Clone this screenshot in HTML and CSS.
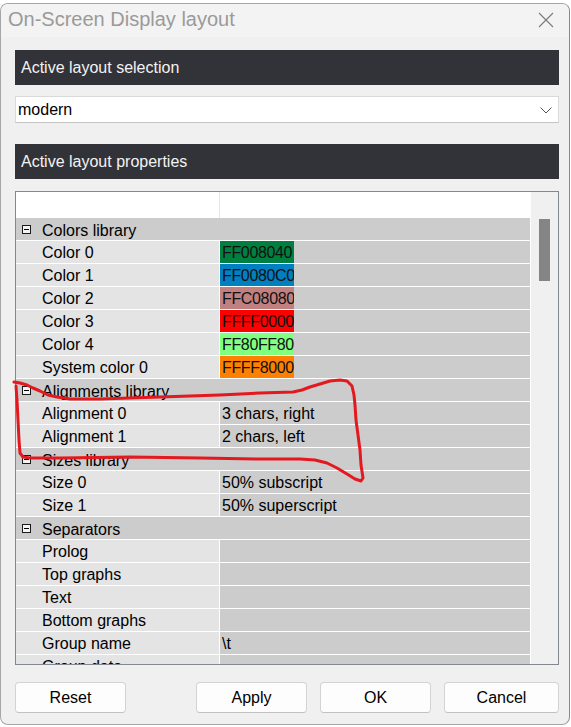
FILE: index.html
```html
<!DOCTYPE html>
<html>
<head>
<meta charset="utf-8">
<title>On-Screen Display layout</title>
<link rel="stylesheet" href="styles.css">
</head>
<body>
<div class="window">
  <div class="titlebar">
    <span class="title">On-Screen Display layout</span>
    <svg class="close" width="16" height="16" viewBox="0 0 16 16"><path d="M1 1 L15 15 M15 1 L1 15" stroke="#7d7d7d" stroke-width="1.2" fill="none"/></svg>
  </div>
  <div class="content">
    <div class="section-head">Active layout selection</div>
    <div class="combo">
      <span class="combo-text">modern</span>
      <svg class="chevron" width="12" height="7" viewBox="0 0 12 7"><path d="M0.5 0.5 L6 6 L11.5 0.5" stroke="#555" stroke-width="1" fill="none"/></svg>
    </div>
    <div class="section-head gap-head">Active layout properties</div>
    <div class="grid">
      <div class="grid-main">
        <div class="grid-head"><div class="hname"></div><div class="hval"></div></div>
        <div class="rows">
          <div class="row cat"><span class="toggle"></span><span class="cat-text">Colors library</span></div>
          <div class="row prop"><div class="name">Color 0</div><div class="val"><span class="swatch sw-0">FF008040</span></div></div>
          <div class="row prop"><div class="name">Color 1</div><div class="val"><span class="swatch sw-1">FF0080C0</span></div></div>
          <div class="row prop"><div class="name">Color 2</div><div class="val"><span class="swatch sw-2">FFC08080</span></div></div>
          <div class="row prop"><div class="name">Color 3</div><div class="val"><span class="swatch sw-3">FFFF0000</span></div></div>
          <div class="row prop"><div class="name">Color 4</div><div class="val"><span class="swatch sw-4">FF80FF80</span></div></div>
          <div class="row prop"><div class="name">System color 0</div><div class="val"><span class="swatch sw-5">FFFF8000</span></div></div>
          <div class="row cat"><span class="toggle"></span><span class="cat-text">Alignments library</span></div>
          <div class="row prop"><div class="name">Alignment 0</div><div class="val"><span class="vtext">3 chars, right</span></div></div>
          <div class="row prop"><div class="name">Alignment 1</div><div class="val"><span class="vtext">2 chars, left</span></div></div>
          <div class="row cat"><span class="toggle"></span><span class="cat-text">Sizes library</span></div>
          <div class="row prop"><div class="name">Size 0</div><div class="val"><span class="vtext">50% subscript</span></div></div>
          <div class="row prop"><div class="name">Size 1</div><div class="val"><span class="vtext">50% superscript</span></div></div>
          <div class="row cat"><span class="toggle"></span><span class="cat-text">Separators</span></div>
          <div class="row prop"><div class="name">Prolog</div><div class="val"></div></div>
          <div class="row prop"><div class="name">Top graphs</div><div class="val"></div></div>
          <div class="row prop"><div class="name">Text</div><div class="val"></div></div>
          <div class="row prop"><div class="name">Bottom graphs</div><div class="val"></div></div>
          <div class="row prop"><div class="name">Group name</div><div class="val"><span class="vtext">\t</span></div></div>
          <div class="row prop"><div class="name">Group data</div><div class="val"></div></div>
        </div>
      </div>
      <div class="scrollbar"><div class="thumb"></div></div>
    </div>
    <div class="buttons">
      <button class="btn">Reset</button>
      <div class="spacer"></div>
      <button class="btn">Apply</button>
      <button class="btn">OK</button>
      <button class="btn btn-wide">Cancel</button>
    </div>
  </div>
</div>
<svg class="annotation" width="571" height="727" viewBox="0 0 571 727">
  <path d="M14 382 L20 383 L27 385 L33 388 L40 391 L48 395 L57 397 L70 399 L100 399 L130 398 L160 397 L190 396 L220 395 L260 393 L293 392 L302 390 L310 387 L320 384 L330 381 L340 380 L347 381 L352 386 L354 395 L355 405 L356 420 L358 435 L360 450 L361 465 L363 478 L361 481 L355 479 L347 474 L337 468 L327 463 L315 460 L300 459 L260 459 L200 458 L130 457 L60 458 L30 458 L23 457 L20 453 L19 440 L18 420 L17 400 L16 386" fill="none" stroke="#e3191f" stroke-width="3" stroke-linejoin="round" stroke-linecap="round"/>
</svg>
</body>
</html>
```

FILE: styles.css
```css
* { box-sizing: border-box; }

html, body {
  margin: 0;
  padding: 0;
  background: #ffffff;
}

body {
  position: relative;
  width: 571px;
  height: 727px;
  overflow: hidden;
  font-family: "Liberation Sans", Arial, sans-serif;
  font-size: 16px;
  color: #000;
}

.window {
  margin-top: 3px;
  width: 570px;
  height: 722px;
  background: #f0f0f0;
  border: 1px solid #a6a6a6;
  border-right-color: #8a8a8a;
  border-radius: 8px;
  overflow: hidden;
}

.titlebar {
  height: 33px;
  background: #f3f3f3;
  display: flex;
  align-items: center;
  justify-content: space-between;
  padding: 0 15px 0 7px;
}

.title {
  font-size: 20px;
  color: #9a9a9a;
  margin-top: -2px;
}

.close { display: block; margin-top: -2px; }

.content {
  padding: 13px 10px 0 14px;
}

.section-head {
  height: 35px;
  background: #323338;
  color: #f2f2f2;
  display: flex;
  align-items: center;
  padding: 1px 0 0 6px;
}

.gap-head { margin-top: 21px; }

.combo {
  margin-top: 11px;
  height: 27px;
  background: #ffffff;
  border: 1px solid #d9d9d9;
  border-bottom-color: #c4c4c4;
  display: flex;
  align-items: center;
  justify-content: space-between;
  padding: 1px 6px 0 2px;
}

.chevron { display: block; }

.grid {
  margin-top: 12px;
  height: 474px;
  border: 1px solid #828790;
  display: flex;
  overflow: hidden;
  background: #ffffff;
}

.grid-main {
  flex: 0 0 515px;
  border-right: 1px solid #ffffff;
  overflow: hidden;
}

.grid-head {
  height: 26px;
  display: flex;
  background: #ffffff;
}

.hname {
  width: 204px;
  border-right: 1px solid #e6e6e6;
}

.row {
  height: 23px;
  border-bottom: 1px solid #ffffff;
  display: flex;
  align-items: stretch;
}

.cat {
  background: #cccccc;
  align-items: center;
  padding-left: 6px;
}

.toggle {
  position: relative;
  width: 9px;
  height: 9px;
  border: 1px solid #1a1a1a;
  background: #f4f4f4;
  flex: 0 0 9px;
  margin-top: 1px;
}

.toggle::after {
  content: "";
  position: absolute;
  left: 1px;
  top: 3px;
  width: 5px;
  height: 1px;
  background: #000;
}

.cat-text {
  margin-left: 11px;
  padding-top: 3px;
}

.name {
  width: 204px;
  flex: 0 0 204px;
  background: #e4e4e4;
  border-right: 1px solid #ffffff;
  padding: 2px 0 0 26px;
  display: flex;
  align-items: center;
}

.val {
  flex: 1;
  background: #cccccc;
  display: flex;
  align-items: stretch;
}

.vtext {
  padding: 2px 0 0 2px;
  display: flex;
  align-items: center;
}

.swatch {
  width: 74px;
  padding: 2px 0 0 2px;
  display: flex;
  align-items: center;
  color: #111;
  letter-spacing: -0.35px;
  overflow: hidden;
  white-space: nowrap;
}

.sw-0 { background: #008040; }
.sw-1 { background: #0080c0; }
.sw-2 { background: #c08080; }
.sw-3 { background: #ff0000; }
.sw-4 { background: #80ff80; }
.sw-5 { background: #ff8000; }

.scrollbar {
  flex: 1;
  background: #f0f0f0;
  padding: 27px 0 0 8px;
}

.thumb {
  width: 11px;
  height: 62px;
  background: #858585;
}

.buttons {
  margin-top: 17px;
  display: flex;
  gap: 13px;
}

.spacer { flex: 1; }

.btn {
  width: 111px;
  height: 31px;
  background: #fdfdfd;
  border: 1px solid #d3d3d3;
  border-bottom-color: #c2c2c2;
  border-radius: 4px;
  font-family: "Liberation Sans", Arial, sans-serif;
  font-size: 16px;
  color: #000;
  padding: 1px 0 0;
}

.btn-wide { width: 115px; }

.annotation {
  position: absolute;
  left: 0;
  top: 0;
  pointer-events: none;
}
```
